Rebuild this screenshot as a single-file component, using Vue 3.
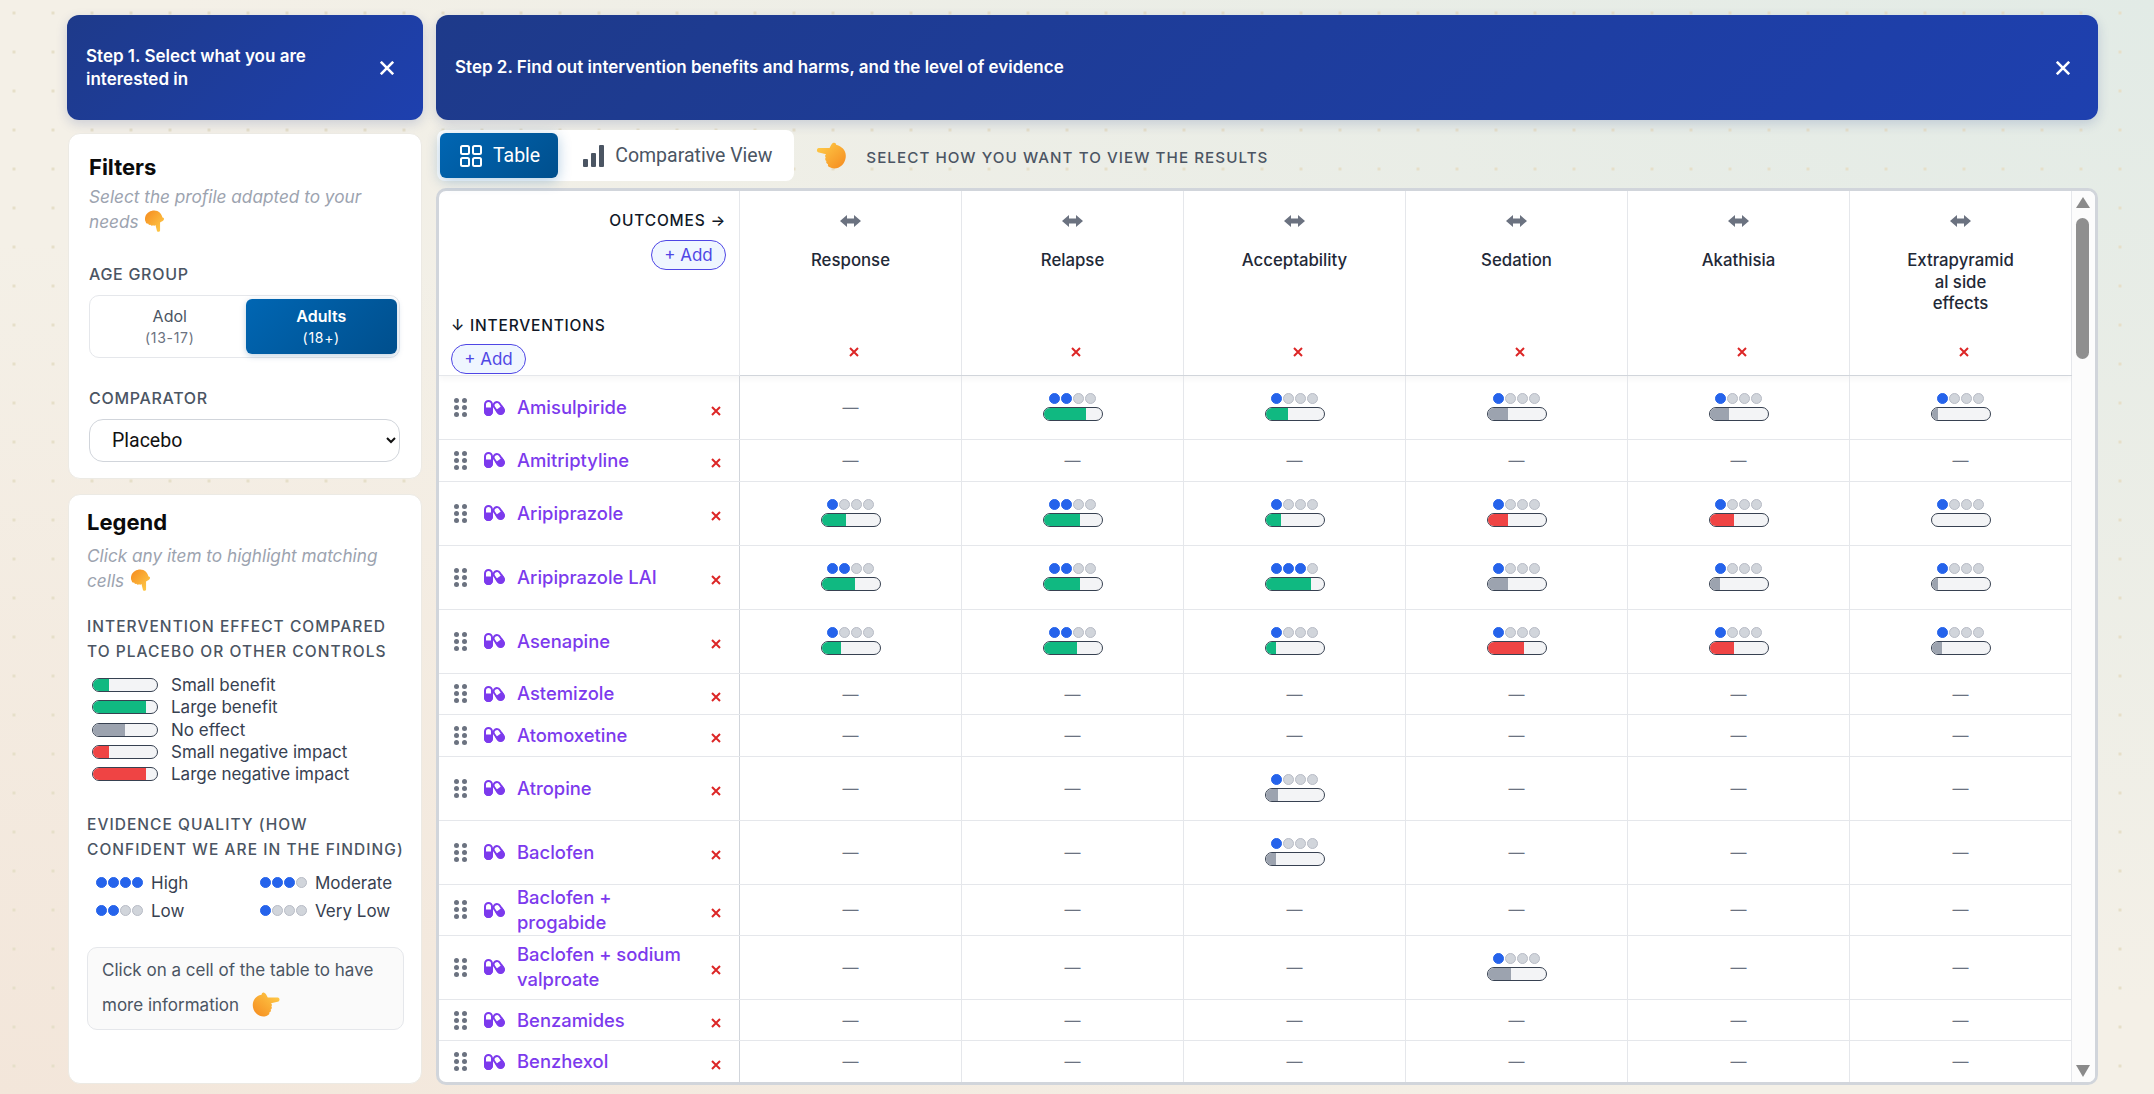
<template>
  <div class="page">
    <svg class="defs" width="0" height="0" aria-hidden="true">
      <defs>
        <linearGradient id="handFill" x1="0" y1="0" x2="1" y2="1">
          <stop offset="0" stop-color="#ffcf4a" />
          <stop offset="1" stop-color="#f58a1f" />
        </linearGradient>
        <symbol id="hand" viewBox="0 0 32 28">
          <path
            fill="url(#handFill)"
            d="M2.8 6.2 L14 6.2 C15 4.2 16 1.6 18 .8 C19.6 .3 20.8 1.3 20.8 2.8 C22 3 28 5 30 10 C32.4 16 29.5 24 23 26.6 C20 27.8 16.5 27.6 14.5 26.2 C12.6 26 11.8 24.4 12.4 23 C10.8 22.6 10 21 10.8 19.6 C9.4 19 9 17.2 10 16 C9 15.2 9.2 13.4 10.4 12.6 L3 10.8 C.2 10.6 .2 6.4 2.8 6.2 Z"
          />
        </symbol>
      </defs>
    </svg>

    <aside class="side">
      <div class="step step-one">
        <span class="step-text">Step 1. Select what you are interested in</span>
        <svg class="step-close" viewBox="0 0 14 14"><path d="M.8.8l12.400 12.400M13.200.8L.8 13.200" /></svg>
      </div>

      <section class="card filters">
        <h2 class="card-title">Filters</h2>
        <p class="hint">Select the profile adapted to your needs <svg class="hand hand-down"><use href="#hand" /></svg></p>
        <div class="field-label first">AGE GROUP</div>
        <div class="toggle">
          <div class="toggle-opt">
            <span>Adol</span>
            <small>(13-17)</small>
          </div>
          <div class="toggle-opt active">
            <span>Adults</span>
            <small>(18+)</small>
          </div>
        </div>
        <div class="field-label">COMPARATOR</div>
        <select class="comparator">
          <option>Placebo</option>
        </select>
      </section>

      <section class="card legend">
        <h2 class="card-title">Legend</h2>
        <p class="hint legend-hint">Click any item to highlight matching cells <svg class="hand hand-down"><use href="#hand" /></svg></p>
        <div class="legend-head">INTERVENTION EFFECT COMPARED TO PLACEBO OR OTHER CONTROLS</div>
        <ul class="effects">
          <li v-for="e in effects" :key="e.label">
            <span class="bar legend-bar"><i :class="e.tone" :style="{ width: e.width + '%' }"></i></span>
            {{ e.label }}
          </li>
        </ul>
        <div class="legend-head second">EVIDENCE QUALITY (HOW CONFIDENT WE ARE IN THE FINDING)</div>
        <div class="qualities">
          <div v-for="q in qualities" :key="q.label" class="quality">
            <span class="dots">
              <i v-for="n in 4" :key="n" :class="{ on: n <= q.level }"></i>
            </span>
            {{ q.label }}
          </div>
        </div>
        <div class="note">
          Click on a cell of the table to have more information
          <svg class="hand hand-right"><use href="#hand" /></svg>
        </div>
      </section>
    </aside>

    <main class="content">
      <div class="step step-two">
        <span class="step-text">Step 2. Find out intervention benefits and harms, and the level of evidence</span>
        <svg class="step-close" viewBox="0 0 14 14"><path d="M.8.8l12.400 12.400M13.200.8L.8 13.200" /></svg>
      </div>

      <div class="view-row">
        <div class="tabs">
          <button type="button" class="tab active">
            <svg class="tab-icon" viewBox="0 0 22 22">
              <rect x="1" y="1" width="8" height="8" rx="1.5" />
              <rect x="13" y="1" width="8" height="8" rx="1.5" />
              <rect x="1" y="13" width="8" height="8" rx="1.5" />
              <rect x="13" y="13" width="8" height="8" rx="1.5" />
            </svg>
            Table
          </button>
          <button type="button" class="tab">
            <svg class="tab-icon" viewBox="0 0 22 22">
              <rect class="solid" x="1" y="14" width="5" height="8" rx="1" />
              <rect class="solid" x="9" y="8" width="5" height="14" rx="1" />
              <rect class="solid" x="17" y="0" width="5" height="22" rx="1" />
            </svg>
            Comparative View
          </button>
        </div>
        <svg class="hand hand-left"><use href="#hand" /></svg>
        <span class="view-hint">SELECT HOW YOU WANT TO VIEW THE RESULTS</span>
      </div>

      <div class="table-box">
        <div class="table-scroll">
          <div class="grid-row head">
            <div class="corner">
              <div class="corner-top">
                <span class="axis">OUTCOMES →</span>
                <button type="button" class="add">+ Add</button>
              </div>
              <div class="corner-bottom">
                <span class="axis">↓ INTERVENTIONS</span>
                <button type="button" class="add">+ Add</button>
              </div>
            </div>
            <div v-for="o in outcomes" :key="o" class="outcome">
              <svg class="swap" viewBox="0 0 21 12">
                <path d="M0 6l7-6v3.500h7V0l7 6-7 6V8.500H7V12z" />
              </svg>
              <span class="outcome-name">{{ o }}</span>
              <svg class="remove head-remove" viewBox="0 0 10 10"><path d="M1 1l8 8M9 1l-8 8" /></svg>
            </div>
          </div>

          <div v-for="r in rows" :key="r.name" class="grid-row">
            <div class="name-cell">
              <svg class="drag" viewBox="0 0 13 19">
                <circle cx="2.5" cy="2.5" r="2.5" /><circle cx="10.5" cy="2.5" r="2.5" />
                <circle cx="2.5" cy="9.5" r="2.5" /><circle cx="10.5" cy="9.5" r="2.5" />
                <circle cx="2.5" cy="16.5" r="2.5" /><circle cx="10.5" cy="16.5" r="2.5" />
              </svg>
              <svg class="pills" viewBox="0 0 21 16">
                <rect x="1" y="1" width="7" height="14" rx="3.5" class="pill-shell" />
                <path d="M0 7.500h9v4a4.500 4.500 0 0 1-9 0z" class="pill-fill" />
                <g transform="rotate(-35 14.800 8)">
                  <rect x="11.500" y="1.500" width="6.600" height="13" rx="3.300" class="pill-shell" />
                  <path d="M10.500 8h8.600v3a4.300 4.300 0 0 1-8.600 0z" class="pill-fill" />
                </g>
              </svg>
              <span class="name">{{ r.name }}</span>
              <svg class="remove" viewBox="0 0 10 10"><path d="M1 1l8 8M9 1l-8 8" /></svg>
            </div>
            <div
              v-for="(c, i) in r.cells"
              :key="i"
              class="cell"
              :class="{ scored: c }"
            >
              <template v-if="c">
                <span class="dots">
                  <i v-for="n in 4" :key="n" :class="{ on: n <= c.q }"></i>
                </span>
                <span class="bar"><i :class="c.tone" :style="{ width: c.w + '%' }"></i></span>
              </template>
              <span v-else class="dash">—</span>
            </div>
          </div>
        </div>

        <div class="scrollbar">
          <span class="arrow up"></span>
          <span class="thumb"></span>
          <span class="arrow down"></span>
        </div>
      </div>
    </main>
  </div>
</template>

<script setup>
const outcomes = ['Response', 'Relapse', 'Acceptability', 'Sedation', 'Akathisia', 'Extrapyramidal side effects']

const effects = [
  { label: 'Small benefit', tone: 'good', width: 25 },
  { label: 'Large benefit', tone: 'good', width: 83 },
  { label: 'No effect', tone: 'none', width: 50 },
  { label: 'Small negative impact', tone: 'bad', width: 25 },
  { label: 'Large negative impact', tone: 'bad', width: 83 }
]

const qualities = [
  { label: 'High', level: 4 },
  { label: 'Moderate', level: 3 },
  { label: 'Low', level: 2 },
  { label: 'Very Low', level: 1 }
]

// q = dots, w = bar width in percent
const g = (q, w) => ({ q, w, tone: 'good' })
const n = (q, w) => ({ q, w, tone: 'none' })
const b = (q, w) => ({ q, w, tone: 'bad' })
const _ = null

const rows = [
  { name: 'Amisulpiride', cells: [_, g(2, 73), g(1, 38), n(1, 35), n(1, 33), n(1, 11)] },
  { name: 'Amitriptyline', cells: [_, _, _, _, _, _] },
  { name: 'Aripiprazole', cells: [g(1, 42), g(2, 63), g(1, 26), b(1, 35), b(1, 42), n(1, 0)] },
  { name: 'Aripiprazole LAI', cells: [g(2, 57), g(2, 63), g(3, 78), n(1, 35), n(1, 18), n(1, 12)] },
  { name: 'Asenapine', cells: [g(1, 33), g(2, 58), g(1, 18), b(1, 63), b(1, 43), n(1, 18)] },
  { name: 'Astemizole', cells: [_, _, _, _, _, _] },
  { name: 'Atomoxetine', cells: [_, _, _, _, _, _] },
  { name: 'Atropine', cells: [_, _, n(1, 21), _, _, _] },
  { name: 'Baclofen', cells: [_, _, n(1, 18), _, _, _] },
  { name: 'Baclofen + progabide', cells: [_, _, _, _, _, _] },
  { name: 'Baclofen + sodium valproate', cells: [_, _, _, n(1, 40), _, _] },
  { name: 'Benzamides', cells: [_, _, _, _, _, _] },
  { name: 'Benzhexol', cells: [_, _, _, _, _, _] }
]
</script>

<style>
html,
body {
  margin: 0;
  height: 100%;
  overflow: hidden;
}
</style>

<style scoped>
.page {
  box-sizing: border-box;
  width: 2154px;
  height: 1094px;
  padding: 15px 56px 0 67px;
  display: grid;
  grid-template-columns: 356px 1662px;
  column-gap: 13px;
  align-items: start;
  font-family: Inter, "Noto Sans", sans-serif;
  color: #111827;
  background:
    radial-gradient(circle, #e6dfc9 1.6px, transparent 2px) -5.5px -6.5px / 39px 39px,
    radial-gradient(ellipse at 100% 0%, #e2ebe6 0%, rgba(226, 235, 230, 0) 65%),
    radial-gradient(ellipse at 0% 100%, #f3e6da 0%, rgba(243, 230, 218, 0) 55%),
    #f4f0e7;
}

.defs {
  position: absolute;
}

.hand {
  display: inline-block;
}

.hand-down {
  width: 23px;
  height: 20px;
  transform: rotate(-90deg) scaleX(-1) rotate(180deg);
  vertical-align: -3px;
  margin-left: 0;
}

.hand-left {
  width: 31px;
  height: 27px;
  margin: 0 19px 0 22px;
}

.hand-right {
  width: 30px;
  height: 25px;
  transform: scaleX(-1);
  vertical-align: -6px;
  margin-left: 7px;
}

.side {
  display: flex;
  flex-direction: column;
  gap: 13px;
}

.step {
  box-sizing: border-box;
  height: 105px;
  display: flex;
  align-items: center;
  justify-content: space-between;
  background: linear-gradient(135deg, #1e3a8a, #1e40af);
  border-radius: 12px;
  box-shadow: 0 4px 12px rgba(30, 58, 138, 0.18);
  color: #fff;
  font-size: 17px;
  font-weight: 600;
  line-height: 23px;
}

.step-one {
  padding: 0 29px 0 19px;
}

.step-one .step-text {
  width: 250px;
}

.step-two {
  padding: 0 28px 0 19px;
}

.step-close {
  flex: none;
  width: 14px;
  height: 14px;
  fill: none;
  stroke: #fff;
  stroke-width: 2.6;
}

.card {
  margin: 0 1px;
  background: #fff;
  border: 1px solid #eceae4;
  border-radius: 12px;
  box-sizing: border-box;
}

.filters {
  height: 346px;
  padding: 20px 21px 0 20px;
}

.legend {
  height: 590px;
  margin-top: 2px;
  padding: 14px 17px 0 18px;
}

.card-title {
  margin: 0;
  font-size: 22px;
  line-height: 26px;
  font-weight: 700;
  color: #0b0b0b;
}

.hint {
  margin: 4px 0 0;
  font-size: 17.2px;
  line-height: 25px;
  font-style: italic;
  color: #9ca3af;
}

.legend-hint {
  margin-top: 8px;
}

.field-label {
  margin-top: 30px;
  font-size: 16px;
  line-height: 20px;
  font-weight: 500;
  letter-spacing: 0.7px;
  color: #4b5563;
}

.toggle {
  margin-top: 11px;
  box-sizing: border-box;
  height: 63px;
  padding: 3px 2px 3px 4px;
  display: grid;
  grid-template-columns: 1fr 1fr;
  border: 1px solid #e5e7eb;
  border-radius: 10px;
}

.toggle-opt {
  display: flex;
  flex-direction: column;
  align-items: center;
  justify-content: center;
  border-radius: 6px;
  font-size: 16px;
  line-height: 21px;
  color: #4b5563;
}

.toggle-opt small {
  font-size: 14px;
  color: #6b7280;
  letter-spacing: 0.7px;
}

.toggle-opt.active {
  background: linear-gradient(135deg, #0066b3, #004f8d);
  color: #fff;
  font-weight: 600;
  box-shadow: 0 2px 6px rgba(0, 80, 143, 0.25);
}

.toggle-opt.active small {
  color: #fff;
  font-weight: 400;
}

.comparator {
  display: block;
  margin-top: 11px;
  width: 100%;
  height: 43px;
  padding: 0 6px 0 18px;
  background: #fff;
  border: 1px solid #d1d5db;
  border-radius: 14px;
  font-family: Roboto, sans-serif;
  font-size: 19.5px;
  color: #111;
}

.legend-head {
  margin-top: 21px;
  font-size: 15.5px;
  line-height: 25px;
  font-weight: 500;
  letter-spacing: 1.05px;
  color: #4b5563;
}

.legend-head.second {
  margin-top: 26.5px;
}

.effects {
  list-style: none;
  margin: 10px 0 0;
  padding: 0;
  font-size: 17px;
  color: #374151;
}

.effects li {
  height: 22.3px;
  display: flex;
  align-items: center;
  gap: 13px;
}

.bar {
  display: block;
  box-sizing: border-box;
  width: 60px;
  height: 14px;
  overflow: hidden;
  background: #f3f4f6;
  border: 1.5px solid #374151;
  border-radius: 8px;
}

.bar i {
  display: block;
  height: 100%;
}

.legend-bar {
  width: 66px;
  margin-left: 5px;
}

.good {
  background: #10b981;
}

.none {
  background: #9ca3af;
}

.bad {
  background: #ef4444;
}

.dots {
  display: flex;
  gap: 1px;
}

.dots i {
  box-sizing: border-box;
  width: 11px;
  height: 11px;
  border-radius: 50%;
  background: #d1d5db;
  border: 1px solid #b8bcc6;
}

.dots i.on {
  background: #2563eb;
  border-color: #2563eb;
}

.qualities {
  margin-top: 10px;
  padding-left: 9px;
  display: grid;
  grid-template-columns: 164px 1fr;
  row-gap: 6px;
  font-size: 17px;
  color: #374151;
}

.quality {
  height: 22px;
  display: flex;
  align-items: center;
  gap: 8px;
}

.note {
  box-sizing: border-box;
  margin-top: 25px;
  height: 83px;
  padding: 5px 14px;
  background: #fafafa;
  border: 1px solid #e5e7eb;
  border-radius: 10px;
  font-size: 17px;
  line-height: 35px;
  color: #4b5563;
}

.view-row {
  margin-top: 10px;
  height: 51px;
  display: flex;
  align-items: center;
  margin-left: 1px;
}

.tabs {
  box-sizing: border-box;
  height: 51px;
  padding: 3px;
  display: flex;
  background: #fff;
  border-radius: 8px;
}

.tab {
  display: flex;
  align-items: center;
  height: 45px;
  padding: 0 19px 0 24px;
  gap: 11px;
  background: none;
  border: 0;
  border-radius: 6px;
  font-family: Roboto, sans-serif;
  font-size: 19.5px;
  color: #4b5563;
}

.tab.active {
  padding: 0 18px 0 20px;
  background: linear-gradient(135deg, #0066b3, #004f8d);
  color: #fff;
  box-shadow: 0 3px 14px rgba(0, 90, 160, 0.3);
}

.tab-icon {
  width: 22px;
  height: 22px;
  fill: none;
  stroke: currentColor;
  stroke-width: 2;
}

.tab-icon .solid {
  fill: currentColor;
  stroke: none;
}

.view-hint {
  margin-top: 4px;
  font-size: 15.2px;
  font-weight: 500;
  letter-spacing: 1.05px;
  color: #4b5563;
}

.table-box {
  margin-top: 7px;
  box-sizing: border-box;
  height: 897px;
  display: flex;
  overflow: hidden;
  background: #fff;
  border: 3px solid #d1d5db;
  border-radius: 10px;
}

.table-scroll {
  width: 1633px;
  overflow: hidden;
}

.grid-row {
  display: grid;
  grid-template-columns: 301px repeat(6, 222px);
  border-bottom: 1px solid #e5e7eb;
}

.grid-row:last-child {
  border-bottom: 0;
}

.head {
  height: 184px;
  border-bottom: 1px solid #d1d5db;
  box-shadow: 0 3px 6px rgba(0, 0, 0, 0.04);
}

.corner {
  display: flex;
  flex-direction: column;
  justify-content: space-between;
  padding: 20px 0 1px;
  border-right: 1px solid #e5e7eb;
  border-bottom: 1px solid #e5e7eb;
  margin-bottom: -1px;
}

.corner-top {
  display: flex;
  flex-direction: column;
  align-items: flex-end;
  gap: 9px;
  padding-right: 13px;
}

.corner-bottom {
  display: flex;
  flex-direction: column;
  align-items: flex-start;
  gap: 8px;
  padding-left: 12px;
}

.axis {
  font-size: 15.5px;
  line-height: 20px;
  font-weight: 500;
  letter-spacing: 0.8px;
  color: #111827;
}

.add {
  width: 75px;
  height: 30px;
  padding: 0;
  background: #eff6ff;
  border: 1px solid #4f46e5;
  border-radius: 15px;
  font-family: Inter, sans-serif;
  font-size: 17px;
  color: #4f46e5;
}

.outcome {
  display: flex;
  flex-direction: column;
  align-items: center;
  padding-top: 24px;
  border-right: 1px solid #e5e7eb;
}

.swap {
  flex: none;
  width: 21px;
  height: 12px;
  fill: #6b7280;
}

.outcome-name {
  margin-top: 23px;
  width: 110px;
  text-align: center;
  overflow-wrap: break-word;
  font-size: 16.8px;
  line-height: 21.5px;
  font-weight: 500;
  color: #1f2937;
}

.remove {
  flex: none;
  width: 10px;
  height: 10px;
  fill: none;
  stroke: #dc2626;
  stroke-width: 2;
}

.head-remove {
  margin: auto 0 18px 7px;
}

.name-cell {
  display: flex;
  align-items: center;
  padding: 0 18px 0 15px;
  border-right: 1px solid #d1d5db;
}

.drag {
  flex: none;
  width: 13px;
  height: 19px;
  fill: #6b7280;
  margin-right: 17px;
}

.pills {
  flex: none;
  width: 21px;
  height: 16px;
  margin-right: 12px;
}

.pill-shell {
  fill: #fff;
  stroke: #7c3aed;
  stroke-width: 2;
}

.pill-fill {
  fill: #7c3aed;
}

.name {
  flex: 1;
  padding-right: 15px;
  font-size: 18.4px;
  line-height: 25px;
  font-weight: 500;
  color: #7c3aed;
}

.name-cell .remove {
  margin-top: 6px;
}

.cell {
  display: flex;
  flex-direction: column;
  align-items: center;
  justify-content: center;
  padding: 8px 0;
  border-right: 1px solid #e5e7eb;
}

.cell.scored {
  padding: 17px 0 18px;
  gap: 3px;
}

.dash {
  font-size: 16px;
  line-height: 24.6px;
  color: #6b7280;
}

.scrollbar {
  flex: 1;
  display: flex;
  flex-direction: column;
  align-items: center;
  padding: 6px 2px 5px 0;
  background: #fcfcfc;
}

.arrow {
  width: 0;
  height: 0;
  border-left: 7px solid transparent;
  border-right: 7px solid transparent;
}

.arrow.up {
  border-bottom: 11px solid #8a8a8a;
}

.arrow.down {
  margin-top: auto;
  border-top: 12px solid #8a8a8a;
}

.thumb {
  margin-top: 10px;
  width: 13px;
  height: 141px;
  border-radius: 7px;
  background: #8f8f8f;
}
</style>
